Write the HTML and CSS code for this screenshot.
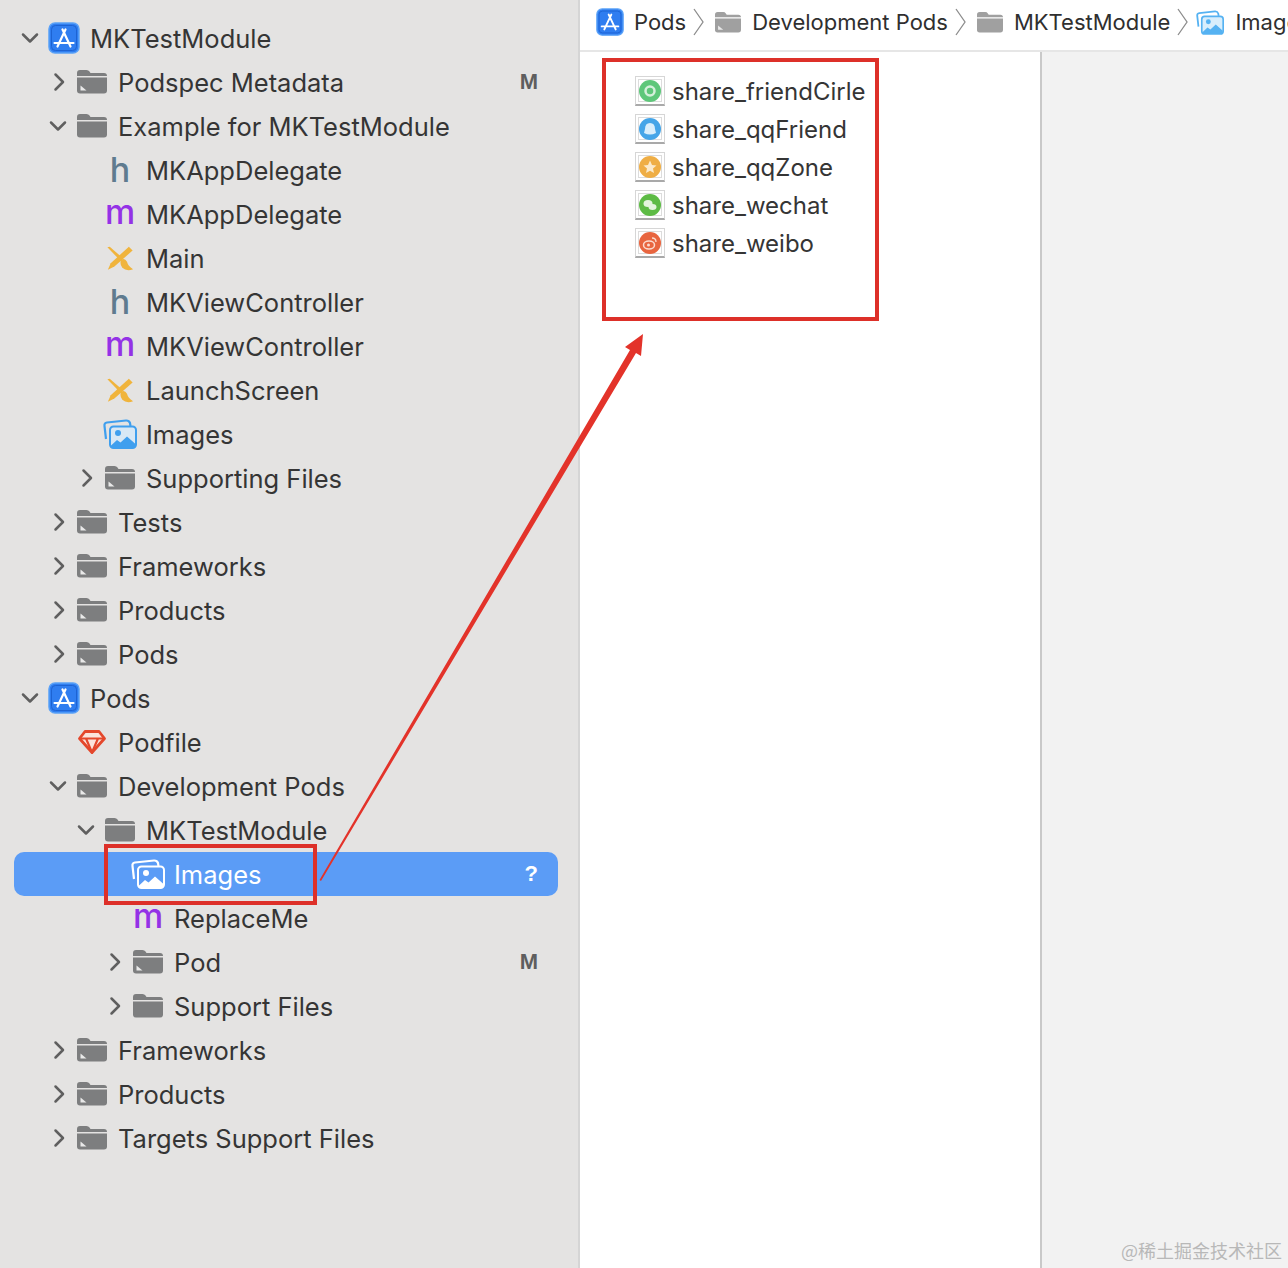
FILE: index.html
```html
<!DOCTYPE html>
<html lang="en">
<head>
<meta charset="utf-8">
<title>Xcode navigator</title>
<link rel="stylesheet" href="styles.css">
</head>
<body>
<svg class="defs" width="0" height="0" aria-hidden="true">
  <defs>
    <symbol id="chev-r" viewBox="0 0 20 20"><path d="M7.500 2.500 L15 10 L7.500 17.500" fill="none" stroke="currentColor" stroke-width="2.500" stroke-linecap="round" stroke-linejoin="round"/></symbol>
    <symbol id="chev-d" viewBox="0 0 20 20"><path d="M3 6.500 L10 13.500 L17 6.500" fill="none" stroke="currentColor" stroke-width="2.500" stroke-linecap="round" stroke-linejoin="round"/></symbol>
    <symbol id="proj" viewBox="0 0 32 32">
      <rect x="1" y="1" width="30" height="30" rx="6" fill="#2f7df0" stroke="#5aa2f8" stroke-width="1.500"/>
      <rect x="3.500" y="3.500" width="25" height="25" rx="4" fill="none" stroke="#1d63d2" stroke-width="1"/>
      <path d="M14.500 7.500 L22.500 24.500 M17.500 7.500 L9.500 24.500 M6.500 21 H25.500" fill="none" stroke="#fff" stroke-width="2.200" stroke-linecap="round"/>
    </symbol>
    <symbol id="folder" viewBox="0 0 30 24">
      <path d="M0 6 V3 Q0 0 3 0 H9.500 Q11.500 0 12.500 1.500 L13.500 3 H27 Q30 3 30 6 Z" fill="currentColor"/>
      <path d="M0 7.500 H30 V20.500 Q30 23.500 27 23.500 H3 Q0 23.500 0 20.500 Z" fill="currentColor"/>
    </symbol>
    <symbol id="folder-t" viewBox="0 0 30 24">
      <path d="M0 6 V3 Q0 0 3 0 H9.500 Q11.500 0 12.500 1.500 L13.500 3 H27 Q30 3 30 6 Z" fill="currentColor"/>
      <path d="M0 7.500 H30 V20.500 Q30 23.500 27 23.500 H3 Q0 23.500 0 20.500 Z" fill="currentColor"/>
      <path d="M3.500 15.500 L9.500 20.500 H3.500 Z" fill="#e9e9e9"/>
    </symbol>
    <symbol id="ib" viewBox="0 0 30 26">
      <path d="M24.500 0.500 L28.500 4.500 L9 21.500 L2 25 L5 18 Z" fill="#f0b43c"/>
      <path d="M1.500 1 L4 0.500 L18.500 13 L15.500 15.500 Z" fill="#f0b43c"/>
      <path d="M16 14.500 Q20 12 22.500 16.500 Q23.500 21 29 24.500 Q22 27 17.500 23 Q14.500 19 16 14.500 Z" fill="#f0b43c"/>
    </symbol>
    <symbol id="assets" viewBox="0 0 34 30">
      <path d="M3 20 L1.500 7 Q1 4 4 3.500 L23 1.500 Q26 1.300 27 4 L27.500 7" fill="none" stroke="currentColor" stroke-width="2.200"/>
      <rect x="7" y="7.500" width="26" height="21.500" rx="3.500" fill="var(--fill)" stroke="currentColor" stroke-width="2"/>
      <circle cx="15" cy="14" r="3" fill="currentColor"/>
      <path d="M7.500 27 L14 21 L17.500 23.500 L24 17.500 L32.500 25 V26 Q32.500 29 29.500 29 H10.500 Q8 29 7.500 27 Z" fill="currentColor"/>
    </symbol>
    <symbol id="gem" viewBox="0 0 28 24">
      <path d="M7 1.500 H21 L26.500 8.500 L14 22.500 L1.500 8.500 Z" fill="#fbe4dc" stroke="#e4482c" stroke-width="2.800" stroke-linejoin="round"/>
      <path d="M1.500 8.500 H26.500 M8 8.500 L14 22.500 L20 8.500" fill="none" stroke="#e4482c" stroke-width="2.200"/>
    </symbol>
  </defs>
</svg>

<aside class="nav">
  <ul class="tree">
    <li class="row d0"><svg class="chev"><use href="#chev-d"/></svg><span class="ico"><svg class="i-proj"><use href="#proj"/></svg></span><span class="name">MKTestModule</span></li>
    <li class="row d1"><svg class="chev"><use href="#chev-r"/></svg><span class="ico"><svg class="i-folder"><use href="#folder-t"/></svg></span><span class="name">Podspec Metadata</span><span class="badge">M</span></li>
    <li class="row d1"><svg class="chev"><use href="#chev-d"/></svg><span class="ico"><svg class="i-folder"><use href="#folder"/></svg></span><span class="name">Example for MKTestModule</span></li>
    <li class="row d2"><span class="slot"></span><span class="ico letter h">h</span><span class="name">MKAppDelegate</span></li>
    <li class="row d2"><span class="slot"></span><span class="ico letter m">m</span><span class="name">MKAppDelegate</span></li>
    <li class="row d2"><span class="slot"></span><span class="ico"><svg class="i-ib"><use href="#ib"/></svg></span><span class="name">Main</span></li>
    <li class="row d2"><span class="slot"></span><span class="ico letter h">h</span><span class="name">MKViewController</span></li>
    <li class="row d2"><span class="slot"></span><span class="ico letter m">m</span><span class="name">MKViewController</span></li>
    <li class="row d2"><span class="slot"></span><span class="ico"><svg class="i-ib"><use href="#ib"/></svg></span><span class="name">LaunchScreen</span></li>
    <li class="row d2"><span class="slot"></span><span class="ico"><svg class="i-assets"><use href="#assets"/></svg></span><span class="name">Images</span></li>
    <li class="row d2"><svg class="chev"><use href="#chev-r"/></svg><span class="ico"><svg class="i-folder"><use href="#folder-t"/></svg></span><span class="name">Supporting Files</span></li>
    <li class="row d1"><svg class="chev"><use href="#chev-r"/></svg><span class="ico"><svg class="i-folder"><use href="#folder-t"/></svg></span><span class="name">Tests</span></li>
    <li class="row d1"><svg class="chev"><use href="#chev-r"/></svg><span class="ico"><svg class="i-folder"><use href="#folder-t"/></svg></span><span class="name">Frameworks</span></li>
    <li class="row d1"><svg class="chev"><use href="#chev-r"/></svg><span class="ico"><svg class="i-folder"><use href="#folder-t"/></svg></span><span class="name">Products</span></li>
    <li class="row d1"><svg class="chev"><use href="#chev-r"/></svg><span class="ico"><svg class="i-folder"><use href="#folder-t"/></svg></span><span class="name">Pods</span></li>
    <li class="row d0"><svg class="chev"><use href="#chev-d"/></svg><span class="ico"><svg class="i-proj"><use href="#proj"/></svg></span><span class="name">Pods</span></li>
    <li class="row d1"><span class="slot"></span><span class="ico"><svg class="i-gem"><use href="#gem"/></svg></span><span class="name">Podfile</span></li>
    <li class="row d1"><svg class="chev"><use href="#chev-d"/></svg><span class="ico"><svg class="i-folder"><use href="#folder-t"/></svg></span><span class="name">Development Pods</span></li>
    <li class="row d2"><svg class="chev"><use href="#chev-d"/></svg><span class="ico"><svg class="i-folder"><use href="#folder"/></svg></span><span class="name">MKTestModule</span></li>
    <li class="row d3 selected"><span class="slot"></span><span class="ico"><svg class="i-assets"><use href="#assets"/></svg></span><span class="name">Images</span><span class="badge">?</span></li>
    <li class="row d3"><span class="slot"></span><span class="ico letter m">m</span><span class="name">ReplaceMe</span></li>
    <li class="row d3"><svg class="chev"><use href="#chev-r"/></svg><span class="ico"><svg class="i-folder"><use href="#folder-t"/></svg></span><span class="name">Pod</span><span class="badge">M</span></li>
    <li class="row d3"><svg class="chev"><use href="#chev-r"/></svg><span class="ico"><svg class="i-folder"><use href="#folder"/></svg></span><span class="name">Support Files</span></li>
    <li class="row d1"><svg class="chev"><use href="#chev-r"/></svg><span class="ico"><svg class="i-folder"><use href="#folder-t"/></svg></span><span class="name">Frameworks</span></li>
    <li class="row d1"><svg class="chev"><use href="#chev-r"/></svg><span class="ico"><svg class="i-folder"><use href="#folder-t"/></svg></span><span class="name">Products</span></li>
    <li class="row d1"><svg class="chev"><use href="#chev-r"/></svg><span class="ico"><svg class="i-folder"><use href="#folder-t"/></svg></span><span class="name">Targets Support Files</span></li>
  </ul>
</aside>

<main class="editor">
  <nav class="crumbs">
    <svg class="c-proj"><use href="#proj"/></svg><span class="c-text">Pods</span>
    <svg class="c-sep" viewBox="0 0 11 28"><path d="M1 1 L10 14 L1 27" fill="none" stroke="#8c8c8c" stroke-width="1.300"/></svg>
    <svg class="c-folder"><use href="#folder-t"/></svg><span class="c-text">Development Pods</span>
    <svg class="c-sep" viewBox="0 0 11 28"><path d="M1 1 L10 14 L1 27" fill="none" stroke="#8c8c8c" stroke-width="1.300"/></svg>
    <svg class="c-folder"><use href="#folder"/></svg><span class="c-text">MKTestModule</span>
    <svg class="c-sep" viewBox="0 0 11 28"><path d="M1 1 L10 14 L1 27" fill="none" stroke="#8c8c8c" stroke-width="1.300"/></svg>
    <svg class="c-assets"><use href="#assets"/></svg><span class="c-text">Images</span>
  </nav>
  <div class="panes">
    <ul class="files">
      <li class="file"><span class="thumb"><svg viewBox="0 0 22 22"><circle cx="11" cy="11" r="11" fill="#5ec77a"/><circle cx="11" cy="11" r="4.500" fill="none" stroke="#d5f0dc" stroke-width="2.500"/></svg></span><span class="file-name">share_friendCirle</span></li>
      <li class="file"><span class="thumb"><svg viewBox="0 0 22 22"><circle cx="11" cy="11" r="11" fill="#45a5e8"/><path d="M11 5 Q16 5 16 11 L17 15 Q11 18 5 15 L6 11 Q6 5 11 5 Z" fill="#d9eefb"/></svg></span><span class="file-name">share_qqFriend</span></li>
      <li class="file"><span class="thumb"><svg viewBox="0 0 22 22"><circle cx="11" cy="11" r="11" fill="#efae45"/><path d="M11 4.500 L13 9 L17.500 9.500 L14 12.500 L15 17 L11 14.700 L7 17 L8 12.500 L4.500 9.500 L9 9 Z" fill="#fbeacb"/></svg></span><span class="file-name">share_qqZone</span></li>
      <li class="file"><span class="thumb"><svg viewBox="0 0 22 22"><circle cx="11" cy="11" r="11" fill="#5dbb45"/><ellipse cx="9" cy="9.500" rx="4.500" ry="3.500" fill="#e3f5dd"/><ellipse cx="13.500" cy="13" rx="4" ry="3" fill="#e3f5dd"/></svg></span><span class="file-name">share_wechat</span></li>
      <li class="file"><span class="thumb"><svg viewBox="0 0 22 22"><circle cx="11" cy="11" r="11" fill="#e8653f"/><ellipse cx="10" cy="13" rx="5.500" ry="4" fill="none" stroke="#fbdcd0" stroke-width="1.500"/><circle cx="9.500" cy="13" r="1.500" fill="#fbdcd0"/><path d="M13 6 Q17 6 17 10" fill="none" stroke="#fbdcd0" stroke-width="1.300"/></svg></span><span class="file-name">share_weibo</span></li>
    </ul>
    <div class="inspector"></div>
  </div>
</main>

<div class="mark mark-list"></div>
<div class="mark mark-row"></div>
<svg class="arrow" viewBox="0 0 1288 1268" aria-hidden="true"><polygon points="319.500,880 630,350 625,347 643,334 641,356 636,353 321,881" fill="#e3332a"/></svg>
<span class="watermark">@稀土掘金技术社区</span>
</body>
</html>
```
FILE: styles.css
```css
* { box-sizing: border-box; }
html, body { margin: 0; padding: 0; }
body {
  position: relative;
  display: flex;
  width: 1288px;
  height: 1268px;
  overflow: hidden;
  background: #fff;
  color: #353535;
  font-family: Inter, "Liberation Sans", sans-serif;
}
.defs { position: absolute; }

/* navigator */
.nav {
  flex: 0 0 580px;
  padding: 16px 20px 0 14px;
  background: #e4e3e2;
  border-right: 2px solid #d5d5d5;
}
.tree { list-style: none; margin: 0; padding: 0; }
.row {
  display: flex;
  align-items: center;
  height: 44px;
  padding-right: 20px;
  border-radius: 10px;
  font-size: 25.5px;
}
.d0 { padding-left: 6px; }
.d1 { padding-left: 34px; }
.d2 { padding-left: 62px; }
.d3 { padding-left: 90px; }

.chev, .slot {
  flex: 0 0 20px;
  width: 20px;
  height: 20px;
  color: #5f5f5f;
}
.ico {
  flex: 0 0 36px;
  display: flex;
  align-items: center;
  justify-content: center;
  margin: 0 8px 0 6px;
}
.name { flex: 1 1 auto; white-space: nowrap; }
.badge {
  font-family: "Liberation Sans", sans-serif;
  font-size: 22px;
  font-weight: 700;
  color: #5e5e5e;
}
.i-proj { width: 32px; height: 32px; }
.i-folder { width: 30px; height: 24px; color: #7d7e7f; }
.i-ib { width: 28px; height: 25px; }
.i-assets { width: 34px; height: 30px; color: #3f9fee; --fill: #d8e8f5; }
.i-gem { width: 28px; height: 24px; }
.letter {
  font-size: 34px;
  font-weight: 500;
  line-height: 44px;
  height: 44px;
}
.h { color: #5f7b8f; }
.m { color: #9432e6; padding-bottom: 4px; }

.selected { background: #5b9cf6; color: #fff; }
.selected .i-assets { color: #fff; --fill: #5b9cf6; }
.selected .badge { color: #fff; }

/* editor */
.editor { flex: 1 1 auto; display: flex; flex-direction: column; min-width: 0; }
.crumbs {
  flex: 0 0 52px;
  display: flex;
  align-items: center;
  padding: 0 0 6px 16px;
  overflow: hidden;
  border-bottom: 2px solid #e6e6e6;
  font-size: 22px;
  color: #2f2f2f;
  white-space: nowrap;
}
.c-proj { flex: 0 0 28px; width: 28px; height: 28px; margin-right: 10px; }
.c-folder { flex: 0 0 26px; width: 26px; height: 21px; margin-right: 11px; color: #a0a0a0; }
.c-assets { flex: 0 0 28px; width: 28px; height: 25px; margin: 0 11px 0 -3px; color: #55b2f2; --fill: #d8eefc; }
.c-sep { flex: 0 0 11px; width: 11px; height: 28px; margin: 0 11px 0 7px; }
.c-text { flex: 0 0 auto; }

.panes { flex: 1 1 auto; display: flex; }
.files {
  flex: 0 0 462px;
  list-style: none;
  margin: 0;
  padding: 20px 0 0 55px;
  background: #fff;
  border-right: 2px solid #c9c9c9;
}
.file { display: flex; align-items: center; height: 38px; gap: 7px; font-size: 24px; }
.thumb {
  flex: 0 0 30px;
  display: flex;
  align-items: center;
  justify-content: center;
  width: 30px;
  height: 30px;
  background: #fff;
  border: 1px solid #d6d6d6;
  border-bottom: 2px solid #a9a9a9;
  box-shadow: inset 0 0 0 2px #fff, inset 0 0 0 3px #dcdcdc;
}
.thumb svg { width: 22px; height: 22px; }
.inspector { flex: 1 1 auto; background: #f2f2f2; }

/* annotations */
.mark { position: absolute; border: 4px solid #dd3029; }
.mark-list { left: 602px; top: 58px; width: 277px; height: 263px; }
.mark-row { left: 104px; top: 844px; width: 213px; height: 61px; }
.arrow { position: absolute; left: 0; top: 0; width: 1288px; height: 1268px; pointer-events: none; }
.watermark {
  position: absolute;
  right: 6px;
  bottom: 5px;
  font-family: "Noto Sans CJK SC", sans-serif;
  font-size: 18px;
  color: #b8b8b8;
}
```
